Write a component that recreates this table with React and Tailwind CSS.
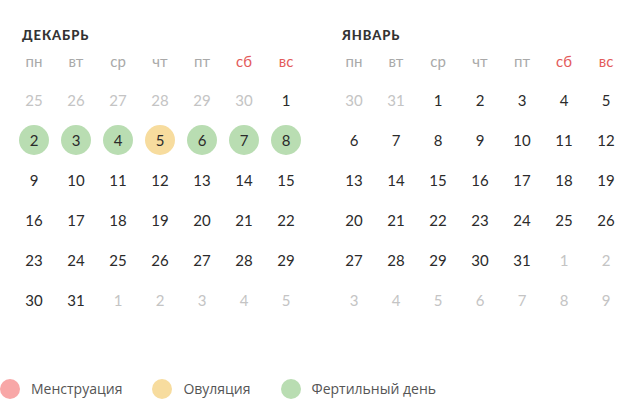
import React from "react";

const weekDays = ["пн", "вт", "ср", "чт", "пт", "сб", "вс"];

const buildMonth = (prevDays, count, startOffset) => {
  const cells = [];
  for (let i = startOffset; i > 0; i--) {
    cells.push({ day: prevDays - i + 1, muted: true });
  }
  for (let d = 1; d <= count; d++) cells.push({ day: d, muted: false });
  let next = 1;
  while (cells.length < 42) cells.push({ day: next++, muted: true });
  return cells;
};

const months = [
  {
    name: "Декабрь",
    cells: buildMonth(30, 31, 6),
    marks: { 2: "fertile", 3: "fertile", 4: "fertile", 5: "ovulation", 6: "fertile", 7: "fertile", 8: "fertile" },
  },
  {
    name: "Январь",
    cells: buildMonth(31, 31, 2),
    marks: {},
  },
];

const markClass = {
  fertile: "bg-[#b9ddb2]",
  ovulation: "bg-[#f7dc9e]",
  period: "bg-[#f8a7a7]",
};

const Month = ({ month }) => (
  <div className="w-[294px]">
    <div className="pl-[9px] h-[28px] flex items-end text-[13px] font-black uppercase tracking-[0.07em] text-[#333]">
      {month.name}
    </div>
    <div className="grid grid-cols-7 mt-[4px]">
      {weekDays.map((w, i) => (
        <div
          key={w}
          className={`h-[24px] flex items-center justify-center text-[15px] ${
            i > 4 ? "text-[#e35b5b]" : "text-[#a9a9a9]"
          }`}
        >
          {w}
        </div>
      ))}
    </div>
    <div className="grid grid-cols-7 mt-[7px]">
      {month.cells.map((c, i) => {
        const mark = !c.muted && month.marks[c.day];
        return (
          <div key={i} className="h-[40px] flex items-center justify-center">
            <div
              className={`w-[30px] h-[30px] rounded-full flex items-center justify-center text-[15px] ${
                mark ? markClass[mark] : ""
              } ${c.muted ? "text-[#c4c4c4]" : "text-[#2b2b2b]"}`}
            >
              {c.day}
            </div>
          </div>
        );
      })}
    </div>
  </div>
);

const Legend = ({ color, label }) => (
  <div className="flex items-center gap-[11px]">
    <span className={`w-[20px] h-[20px] rounded-full ${color}`} />
    <span>{label}</span>
  </div>
);

export default function App() {
  return (
    <div className="w-[640px] h-[412px] bg-white font-[family-name:Lato,sans-serif] relative">
      <div className="flex gap-[26px] pl-[13px] pt-[17px]">
        {months.map((m) => (
          <Month key={m.name} month={m} />
        ))}
      </div>
      <div className="flex gap-[30px] mt-[58px] text-[14px] text-[#555] font-[family-name:'Open_Sans',sans-serif]">
        <Legend color="bg-[#f8a7a7]" label="Менструация" />
        <Legend color="bg-[#f7dc9e]" label="Овуляция" />
        <Legend color="bg-[#b9ddb2]" label="Фертильный день" />
      </div>
    </div>
  );
}
